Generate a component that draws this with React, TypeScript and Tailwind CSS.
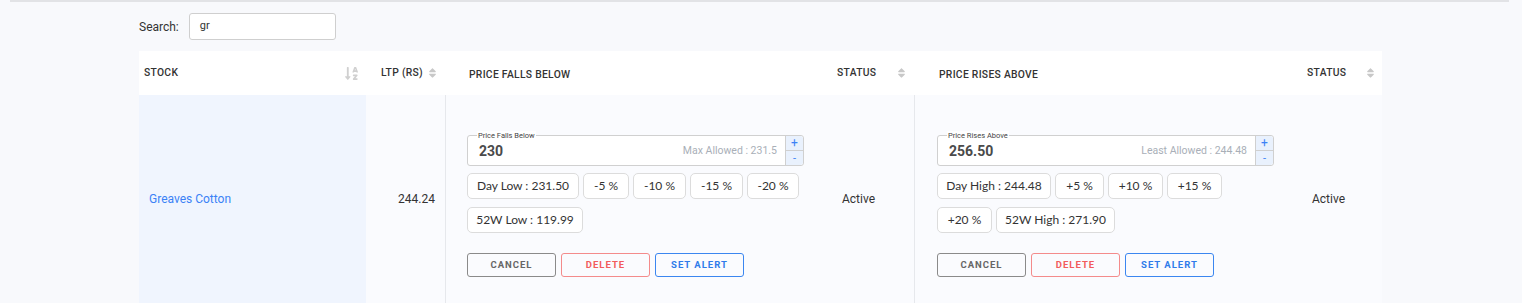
import React from "react";
import { FaSort, FaSortAlphaDown } from "react-icons/fa";

const roboto = { fontFamily: "Roboto, 'Liberation Sans', sans-serif" };
const lato = { fontFamily: "Lato, 'Liberation Sans', sans-serif" };

function Chip({ label, w }: { label: string; w: number }) {
  return (
    <div
      className="h-[26px] flex items-center justify-center rounded-[5px] border border-[#dcdcdc] bg-white text-[12px] text-[#333] whitespace-nowrap"
      style={{ ...lato, width: w }}
    >
      {label}
    </div>
  );
}

function PriceBox({
  label,
  value,
  hint,
  chips,
}: {
  label: string;
  value: string;
  hint: string;
  chips: [string, number][];
}) {
  return (
    <div className="w-[337px]">
      <div className="relative h-[31px] flex rounded-[3px] border border-[#d0d0d0] bg-white">
        <span
          className="absolute left-[9px] top-[-5px] px-[1px] bg-white text-[7.5px] leading-[9px] text-[#444]"
          style={roboto}
        >
          {label}
        </span>
        <div className="flex-1 flex items-center justify-between pl-[11px] pr-[8px]" style={roboto}>
          <span className="text-[14px] font-bold text-[#4a4a4a] mt-[1px]">{value}</span>
          <span className="text-[10.5px] text-[#a9afb8] mt-[1px]">{hint}</span>
        </div>
        <div className="w-[18px] flex flex-col border-l border-[#d0d0d0] bg-[#e9f1fd] rounded-r-[3px]">
          <div className="flex-1 flex items-center justify-center text-[#3b82f6] text-[12px] leading-none border-b border-[#d0d0d0]">
            +
          </div>
          <div className="flex-1 flex items-center justify-center text-[#3b82f6] text-[11px] leading-none">
            -
          </div>
        </div>
      </div>
      <div className="flex flex-wrap gap-x-[4px] gap-y-[8px] mt-[7px]">
        {chips.map(([c, w]) => (
          <Chip key={c} label={c} w={w} />
        ))}
      </div>
      <div className="flex gap-[5px] mt-[20px]" style={roboto}>
        <button className="w-[89px] h-[24px] rounded-[3px] border border-[#8a8a8a] text-[#666] text-[9.5px] font-bold tracking-[1px]">
          CANCEL
        </button>
        <button className="w-[89px] h-[24px] rounded-[3px] border border-[#f48b8b] text-[#f25c5c] text-[9.5px] font-bold tracking-[1px]">
          DELETE
        </button>
        <button className="w-[89px] h-[24px] rounded-[3px] border border-[#3b86f0] text-[#2f7bea] text-[9.5px] font-bold tracking-[1px]">
          SET ALERT
        </button>
      </div>
    </div>
  );
}

export default function App() {
  const th = "text-[10.3px] font-medium text-[#333] tracking-[0.3px]";
  const sortIcon = <FaSort className="text-[#c8c8c8] w-[9px] h-[12px]" />;
  return (
    <div className="w-[1522px] h-[303px] overflow-hidden bg-[#f8f9fc]" style={roboto}>
      <div className="mx-[10px] w-[1499px] border-t-[2px] border-[#e2e3e6]" />
      <div className="pl-[139px]">
        <div className="flex items-center h-[27px] mt-[11px]">
          <span className="text-[12px] text-[#333] mr-[10px]">Search:</span>
          <div className="w-[147px] h-[27px] rounded-[3px] border border-[#cfcfcf] bg-white flex items-center pl-[10px] text-[11px] text-[#333]">
            gr
          </div>
        </div>

        <div className="w-[1243px] mt-[11px]">
          <div className="flex h-[44px] bg-white items-center">
            <div className="w-[227px] pl-[5px] pr-[8px] flex items-center justify-between">
              <span className={th}>STOCK</span>
              <FaSortAlphaDown className="text-[#d0d0d0] w-[13px] h-[15px]" />
            </div>
            <div className="w-[79px] pl-[15px] pr-[8px] flex items-center justify-between">
              <span className={th}>LTP (RS)</span>
              {sortIcon}
            </div>
            <div className="w-[378px] pl-[24px]">
              <span className={th}>PRICE FALLS BELOW</span>
            </div>
            <div className="w-[91px] pl-[14px] pr-[8px] flex items-center justify-between">
              <span className={th}>STATUS</span>
              {sortIcon}
            </div>
            <div className="w-[379px] pl-[25px]">
              <span className={th}>PRICE RISES ABOVE</span>
            </div>
            <div className="w-[89px] pl-[14px] pr-[7px] flex items-center justify-between">
              <span className={th}>STATUS</span>
              {sortIcon}
            </div>
          </div>

          <div className="flex h-[208px] bg-[#fafbfe]">
            <div className="w-[227px] bg-[#f0f5fe] pl-[10px] flex items-center">
              <span className="text-[12px] text-[#3b82f6]">Greaves Cotton</span>
            </div>
            <div className="w-[79px] pr-[10px] flex items-center justify-end">
              <span className="text-[12px] text-[#333]">244.24</span>
            </div>
            <div className="w-[378px] border-l border-[#e6e8ec] pl-[21px] pt-[40px]">
              <PriceBox
                label="Price Falls Below"
                value="230"
                hint="Max Allowed : 231.5"
                chips={[
                  ["Day Low : 231.50", 112],
                  ["-5 %", 46],
                  ["-10 %", 53],
                  ["-15 %", 53],
                  ["-20 %", 52],
                  ["52W Low : 119.99", 116],
                ]}
              />
            </div>
            <div className="w-[91px] pl-[19px] flex items-center">
              <span className="text-[12px] text-[#333]">Active</span>
            </div>
            <div className="w-[379px] border-l border-[#e6e8ec] pl-[22px] pt-[40px]">
              <PriceBox
                label="Price Rises Above"
                value="256.50"
                hint="Least Allowed : 244.48"
                chips={[
                  ["Day High : 244.48", 114],
                  ["+5 %", 49],
                  ["+10 %", 55],
                  ["+15 %", 55],
                  ["+20 %", 55],
                  ["52W High : 271.90", 119],
                ]}
              />
            </div>
            <div className="w-[89px] pl-[19px] flex items-center">
              <span className="text-[12px] text-[#333]">Active</span>
            </div>
          </div>
        </div>
      </div>
    </div>
  );
}
